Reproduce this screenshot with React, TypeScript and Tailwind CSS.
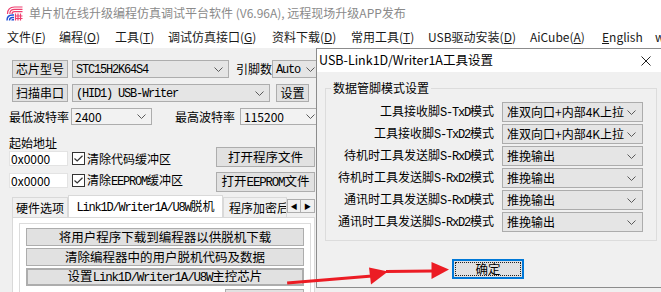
import React from "react";

const menu = [
  { t: "文件(", k: "F", e: ")", w: "w-[52px]" },
  { t: "编程(", k: "O", e: ")", w: "w-[56px]" },
  { t: "工具(", k: "T", e: ")", w: "w-[53px]" },
  { t: "调试仿真接口(", k: "G", e: ")", w: "w-[104px]" },
  { t: "资料下载(", k: "D", e: ")", w: "w-[79px]" },
  { t: "常用工具(", k: "T", e: ")", w: "w-[77px]" },
  { t: "USB驱动安装(", k: "D", e: ")", w: "w-[102px]" },
  { t: "AiCube(", k: "A", e: ")", w: "w-[72px]" },
  { t: "", k: "E", e: "nglish", w: "w-[53px]" },
  { t: "w", k: "", e: "", w: "w-[20px]" },
];

const pins = [
  { label: "工具接收脚S-TxD模式", value: "准双向口+内部4K上拉" },
  { label: "工具接收脚S-TxD2模式", value: "准双向口+内部4K上拉" },
  { label: "待机时工具发送脚S-RxD模式", value: "推挽输出" },
  { label: "待机时工具发送脚S-RxD2模式", value: "推挽输出" },
  { label: "通讯时工具发送脚S-RxD模式", value: "推挽输出" },
  { label: "通讯时工具发送脚S-RxD2模式", value: "推挽输出" },
];

// latin runs drawn in a narrow mono face, like the SimSun labels
function M({ t }: { t: string }) {
  const parts = t.split(/([\x20-\x7e]+)/);
  return (
    <>
      {parts.map((p, i) =>
        /^[\x20-\x7e]+$/.test(p) ? (
          <span key={i} className="font-['Liberation_Mono',monospace] tracking-[-1.2px]">
            {p}
          </span>
        ) : (
          <React.Fragment key={i}>{p}</React.Fragment>
        )
      )}
    </>
  );
}

function Chevron() {
  return (
    <svg width="9" height="5" viewBox="0 0 9 5" className="shrink-0">
      <path d="M0.5 0.5 L4.5 4.5 L8.5 0.5" fill="none" stroke="#5a5a5a" strokeWidth="1" />
    </svg>
  );
}

function Combo({ className, children }: { className: string; children: React.ReactNode }) {
  return (
    <div
      className={`flex h-full shrink-0 items-center justify-between border border-[#adadad] bg-[#e5e5e5] pl-[3px] whitespace-nowrap ${className}`}
    >
      <span className="leading-[14px]">{children}</span>
      <Chevron />
    </div>
  );
}

function Btn({ className, children }: { className: string; children: React.ReactNode }) {
  return (
    <div
      className={`flex shrink-0 items-center justify-center border border-[#adadad] bg-[#e1e1e1] leading-none whitespace-nowrap ${className}`}
    >
      {children}
    </div>
  );
}

function Check() {
  return (
    <span className="flex h-[13px] w-[13px] shrink-0 items-center justify-center border border-[#333] bg-white">
      <svg width="9" height="7" viewBox="0 0 9 7">
        <path d="M0.5 3.5 L3.2 6 L8.5 0.8" fill="none" stroke="#333" strokeWidth="1.2" />
      </svg>
    </span>
  );
}

function Logo() {
  return (
    <svg width="17" height="15" viewBox="0 0 17 15" className="shrink-0">
      <g stroke="#ee3f6f" strokeWidth="1.2" fill="none">
        <path d="M1.5 8 Q1.5 1 8.5 1 H16.5" />
        <path d="M3.8 8 Q3.8 3.3 8.5 3.3 H16.5" />
        <path d="M6 8 Q6 5.6 8.5 5.6 H16.5" />
        <path d="M9.5 7.5 V14.5 M12 7.5 V14.5 M14.5 7.5 V14.5 M9 10 H16.5 M9 12.5 H16.5" />
      </g>
      <g stroke="#1d4fd6" strokeWidth="1.4" fill="none">
        <path d="M1 14.5 Q1 9 6.5 9 H8" />
        <path d="M3.5 14.5 Q3.5 11.5 6.5 11.5 H8" />
        <path d="M6 14.5 Q6 13.8 6.8 13.8 H8" />
      </g>
    </svg>
  );
}

function Left() {
  return (
    <div className="w-[316px] shrink-0 overflow-hidden font-['Noto_Sans_CJK_SC',sans-serif]">
      <div className="mt-[12px] flex h-[18px] pl-[12px]">
        <Btn className="w-[56px]">芯片型号</Btn>
        <Combo className="ml-[4px] w-[157px] pr-[5px]">
          <M t="STC15H2K64S4" />
        </Combo>
        <span className="ml-[7px] w-[36px] shrink-0 self-center leading-none">引脚数</span>
        <Combo className="w-[46px] pr-[2px]">
          <M t="Auto" />
        </Combo>
      </div>
      <div className="mt-[6px] flex h-[18px] pl-[12px]">
        <Btn className="w-[56px]">扫描串口</Btn>
        <Combo className="ml-[4px] w-[198px] pr-[5px]">
          <M t="(HID1) USB-Writer" />
        </Combo>
        <Btn className="ml-[6px] w-[33px]">设置</Btn>
      </div>
      <div className="mt-[6px] flex h-[17px] pl-[9px]">
        <span className="w-[60px] shrink-0 self-center leading-none">最低波特率</span>
        <Combo className="ml-[2px] w-[81px] bg-[#f2f2f2] pr-[5px]">2400</Combo>
        <span className="ml-[23px] w-[60px] shrink-0 self-center leading-none">最高波特率</span>
        <Combo className="ml-[5px] w-[78px] bg-[#f2f2f2] pr-[2px]">115200</Combo>
      </div>

      <div className="mt-[11px] flex">
        <div className="w-[216px] shrink-0 pl-[9px]">
          <div className="h-[15px] leading-[14px]">起始地址</div>
          <div className="flex h-[15px] items-center">
            <div className="flex h-[15px] w-[59px] shrink-0 items-center border border-[#e3e3e3] bg-white pl-[1px] leading-none">
              0x0000
            </div>
            <span className="ml-[4px]">
              <Check />
            </span>
            <span className="ml-[2px] leading-none">清除代码缓冲区</span>
          </div>
          <div className="mt-[7px] flex h-[15px] items-center">
            <div className="flex h-[15px] w-[59px] shrink-0 items-center border border-[#e3e3e3] bg-white pl-[1px] leading-none">
              0x0000
            </div>
            <span className="ml-[4px]">
              <Check />
            </span>
            <span className="ml-[2px] leading-none whitespace-nowrap">
              清除
              <M t="EEPROM" />
              缓冲区
            </span>
          </div>
        </div>
        <div className="pt-[11px] text-[12.5px]">
          <Btn className="h-[20px] w-[99px]">打开程序文件</Btn>
          <Btn className="mt-[5px] h-[20px] w-[99px]">
            <span>
              打开
              <M t="EEPROM" />
              文件
            </span>
          </Btn>
        </div>
      </div>

      <div className="mt-[3px] flex h-[22px] items-end pl-[12px] whitespace-nowrap leading-none">
        <div className="flex h-[20px] w-[56px] shrink-0 items-center justify-center border border-b-0 border-[#d9d9d9] bg-[#f0f0f0]">
          硬件选项
        </div>
        <div className="flex h-[22px] w-[155px] shrink-0 items-center justify-center border border-b-0 border-[#d9d9d9] bg-white">
          <span>
            <M t="Link1D/Writer1A/U8W" />
            脱机
          </span>
        </div>
        <div className="flex h-[20px] w-[64px] shrink-0 items-center overflow-hidden border border-b-0 border-[#d9d9d9] bg-[#f0f0f0] pl-[5px]">
          程序加密后
        </div>
        <div className="mb-[4px] flex h-[14px] shrink-0 self-end">
          <div className="flex h-[14px] w-[14px] items-center justify-center border border-[#adadad] bg-[#f0f0f0] text-[7px]">
            ◀
          </div>
          <div className="flex h-[14px] w-[14px] items-center justify-center border border-l-0 border-[#adadad] bg-[#f0f0f0] text-[7px]">
            ▶
          </div>
        </div>
      </div>

      <div className="ml-[12px] h-[80px] w-[303px] border border-[#d9d9d9] bg-white pt-[5px]">
        <div className="ml-[6px] h-[80px] w-[292px] border border-[#dcdcdc] px-[6px] pt-[4px] text-[12.5px]">
          <Btn className="h-[18px] w-[278px]">将用户程序下载到编程器以供脱机下载</Btn>
          <Btn className="mt-[2px] h-[18px] w-[278px]">清除编程器中的用户脱机代码及数据</Btn>
          <Btn className="mt-[2px] h-[18px] w-[278px] border-2 border-[#0078d7]">
            <span>
              设置
              <M t="Link1D/Writer1A/U8W" />
              主控芯片
            </span>
          </Btn>
          <Btn className="mt-[3px] ml-[199px] h-[18px] w-[79px]"> </Btn>
        </div>
      </div>
    </div>
  );
}

function Dialog() {
  return (
    <div className="h-[240px] flex-1 self-start border-t border-b border-l border-[#8c8c8c] bg-[#f0f0f0] font-['Noto_Sans_CJK_SC',sans-serif]">
      <div className="flex h-[23px] items-center justify-between bg-white pr-[10px] pl-[2px] leading-none">
        <span className="text-[12.5px]">USB-Link1D/Writer1A工具设置</span>
        <svg width="10" height="10" viewBox="0 0 10 10">
          <path d="M0.5 0.5 L9.5 9.5 M9.5 0.5 L0.5 9.5" stroke="#222" strokeWidth="1" />
        </svg>
      </div>
      <div className="pt-[8px] pl-[8px]">
        <fieldset className="w-[332px] border border-[#dcdcdc] pb-[8px]">
          <legend className="ml-[5px] px-[2px] leading-[16px]">数据管脚模式设置</legend>
          <div className="flex flex-col gap-[2px] pt-[6px]">
            {pins.map((p) => (
              <div key={p.label} className="flex h-[20px] items-center justify-end pr-[13px]">
                <span className="whitespace-nowrap leading-none">
                  <M t={p.label} />
                </span>
                <div className="ml-[8px] flex h-[20px] w-[141px] shrink-0 items-center justify-between border border-[#acacac] bg-[#e5e5e5] pr-[6px] pl-[4px] leading-none whitespace-nowrap">
                  <span>{p.value}</span>
                  <Chevron />
                </div>
              </div>
            ))}
          </div>
        </fieldset>
        <div className="mt-[18px] ml-[127px] flex h-[20px] w-[72px] items-center justify-center border-2 border-[#0078d7] bg-[#e1e1e1] p-[1px]">
          <div className="flex h-full w-full items-center justify-center border border-dotted border-[#222] text-[12.5px] leading-none">
            确定
          </div>
        </div>
      </div>
    </div>
  );
}

function Arrows() {
  return (
    <svg className="pointer-events-none absolute top-0 left-0" width="661" height="292" viewBox="0 0 661 292">
      <g fill="#ec1c24" stroke="none">
        <path d="M287 281.5 L372 274.5 L372.3 277.6 L287.3 284.6 Z" />
        <path d="M369 267.5 L388 271.5 L371 284.5 Z" />
        <path d="M386 270 L433 269.5 L433 272.5 L386 273 Z" />
        <path d="M431.5 262 L449 269.5 L431.5 279 Z" />
      </g>
    </svg>
  );
}

export default function App() {
  return (
    <div className="relative h-[292px] w-[661px] overflow-hidden bg-[#f0f0f0] text-[12px] text-black font-['Noto_Sans_CJK_SC',sans-serif]">
      <div className="bg-white">
        <div className="flex h-[26px] items-center pl-[6px]">
          <Logo />
          <span className="ml-[6px] leading-none whitespace-nowrap text-[#8a8a8a]">
            单片机在线升级编程仿真调试平台软件 (V6.96A), 远程现场升级APP发布
          </span>
        </div>
        <div className="flex h-[22px] items-center pl-[7px] leading-none whitespace-nowrap text-[#1a1a1a]">
          {menu.map((m, i) => (
            <span key={i} className={`shrink-0 ${m.w}`}>
              {m.t}
              {m.k && <span className="underline">{m.k}</span>}
              {m.e}
            </span>
          ))}
        </div>
      </div>
      <div className="flex h-[244px]">
        <Left />
        <Dialog />
      </div>
      <Arrows />
    </div>
  );
}
